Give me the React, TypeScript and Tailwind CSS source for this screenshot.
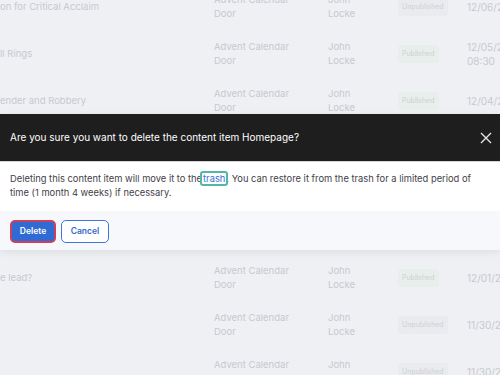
import React from "react";

const rows = [
  { title: "on for Critical Acclaim", page: "Advent Calendar Door", user: "John Locke", status: "Unpublished", date: "12/06/2023", h: "h-[47px]" },
  { title: "ll Rings", page: "Advent Calendar Door", user: "John Locke", status: "Published", date: "12/05/2023 08:30", h: "h-[47px]" },
  { title: "ender and Robbery", page: "Advent Calendar Door", user: "John Locke", status: "Published", date: "12/04/2023", h: "h-[47px]" },
  { title: "ing Season", page: "Advent Calendar Door", user: "John Locke", status: "Published", date: "12/03/2023", h: "h-[65px]" },
  { title: "t Morning", page: "Advent Calendar Door", user: "John Locke", status: "Published", date: "12/02/2023", h: "h-[66px]" },
  { title: "e lead?", page: "Advent Calendar Door", user: "John Locke", status: "Published", date: "12/01/2023", h: "h-[46px]" },
  { title: "", page: "Advent Calendar Door", user: "John Locke", status: "Unpublished", date: "11/30/2023", h: "h-[47px]" },
  { title: "", page: "Advent Calendar Door", user: "John Locke", status: "Unpublished", date: "11/30/2023", h: "h-[47px]" },
];

export default function App() {
  return (
    <div className="relative h-[375px] w-[500px] overflow-hidden bg-[#eff0f4] font-['Inter',sans-serif]">
      {/* faded list behind the modal */}
      <div className="-mt-[17px] text-[9.5px] leading-[14px] text-[#c6c9d0]">
        {rows.map((r, i) => (
          <div key={i} className={`flex items-center ${r.h}`}>
            <div className="w-[214px] shrink-0">{r.title}</div>
            <div className="w-[114px] shrink-0 pr-[30px]">{r.page}</div>
            <div className="w-[70px] shrink-0 pr-[36px]">{r.user}</div>
            <div className="w-[69px] shrink-0">
              <span
                className={`inline-block rounded-[3px] px-1 py-[2px] text-[7px] ${
                  r.status === "Published" ? "bg-[#e8eeec] text-[#cbd3d0]" : "bg-[#eaebef] text-[#cdd0d6]"
                }`}
              >
                {r.status}
              </span>
            </div>
            <div className="w-[40px] shrink-0 text-[10px]">{r.date}</div>
          </div>
        ))}
      </div>

      {/* modal */}
      <div className="absolute left-0 right-0 top-[114px] shadow-[0_2px_8px_rgba(0,0,0,0.08)]">
        <div className="flex h-[48px] items-center justify-between border-b border-[#d4d5d8] bg-[#1e1e1e] pl-[10px] pr-[7px]">
          <h2 className="text-[10px] text-white">Are you sure you want to delete the content item Homepage?</h2>
          <svg width="14" height="14" viewBox="0 0 14 14" fill="none" stroke="#e5e5e5" strokeWidth="1.4">
            <path d="M2 2l10 10M12 2L2 12" />
          </svg>
        </div>
        <div className="bg-white px-[10px] pb-[11px] pt-[10px] text-[9.35px] leading-[14px] text-[#3f4147]">
          Deleting this content item will move it to the
          <span className="rounded-[1px] px-[1px] text-[#3a6fd8] outline outline-2 outline-[#52b7a5]">trash</span>. You
          can restore it from the trash for a limited period of time (1 month 4 weeks) if necessary.
        </div>
        <div className="flex gap-[5px] bg-[#f7f8fb] px-[10px] pb-[7px] pt-[9px]">
          <button className="h-[23px] w-[46px] rounded-[5px] border-2 border-[#c9415f] bg-[#2f6bd3] text-[8.5px] font-semibold text-white">
            Delete
          </button>
          <button className="h-[23px] w-[48px] rounded-[5px] border-[1.5px] border-[#3d78d8] bg-white text-[8.5px] font-semibold text-[#3468c9]">
            Cancel
          </button>
        </div>
      </div>
    </div>
  );
}
